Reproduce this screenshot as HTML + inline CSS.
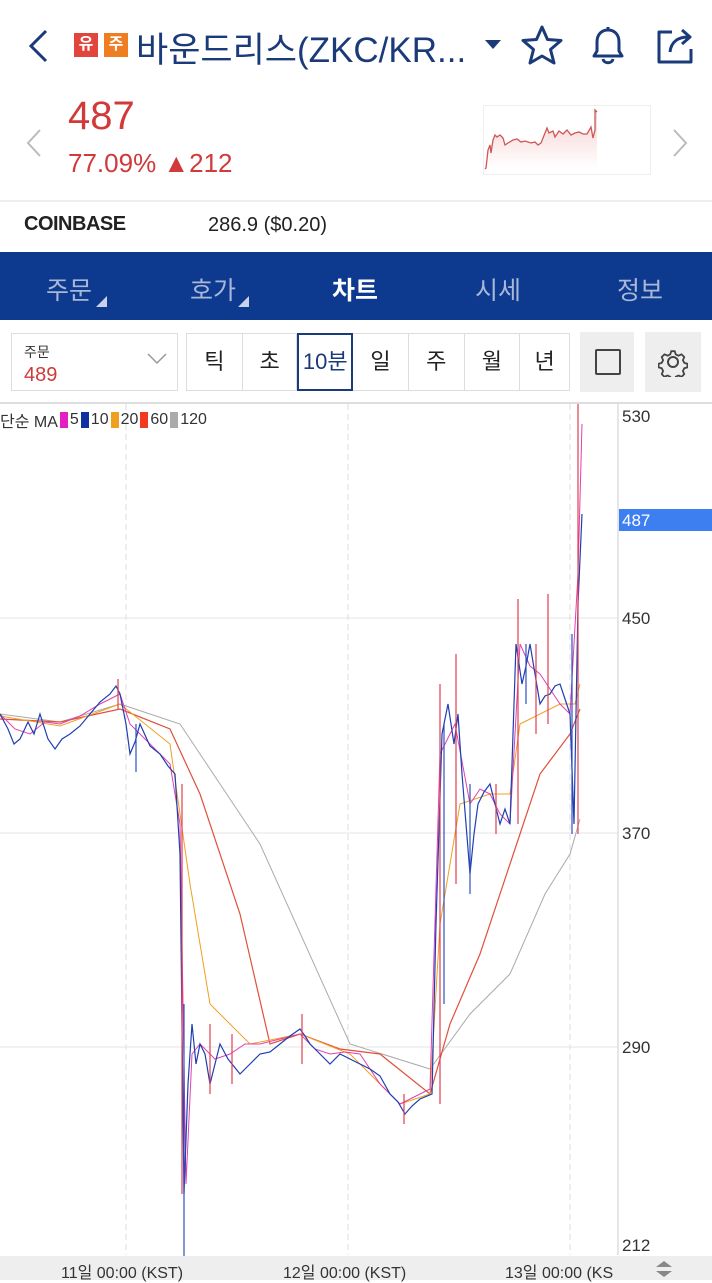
<!DOCTYPE html>
<html><head><meta charset="utf-8"><style>
*{margin:0;padding:0;box-sizing:border-box}
body{width:712px;height:1280px;overflow:hidden;background:#fff;font-family:"Liberation Sans","Noto Sans CJK KR",sans-serif;position:relative}
.a{position:absolute}
</style></head><body>
<svg class="a" style="left:26px;top:28px" width="24" height="36"><path d="M20 3 L5 18 L20 33" stroke="#1a3a7a" stroke-width="3" fill="none"/></svg>
<div class="a" style="left:74px;top:33px;width:24px;height:24px;background:#e2453c;color:#fff;font-size:16px;font-weight:bold;text-align:center;line-height:24px">유</div>
<div class="a" style="left:104px;top:33px;width:24px;height:24px;background:#ef7d22;color:#fff;font-size:16px;font-weight:bold;text-align:center;line-height:24px">주</div>
<div class="a" style="left:136px;top:22px;font-size:35px;color:#1a3a7a;letter-spacing:0px">바운드리스(ZKC/KR...</div>
<div class="a" style="left:485px;top:40px;width:0;height:0;border-left:8px solid transparent;border-right:8px solid transparent;border-top:9px solid #1a3a7a"></div>
<svg class="a" style="left:520px;top:24px" width="44" height="42"><path d="M22 3 L27.5 15.5 L41 16.5 L30.5 25.5 L34 39 L22 32 L10 39 L13.5 25.5 L3 16.5 L16.5 15.5Z" stroke="#1a3a7a" stroke-width="3" fill="none" stroke-linejoin="round"/></svg>
<svg class="a" style="left:586px;top:24px" width="44" height="42"><path d="M8 32 L11 27 V18 C11 10 16 6 22 6 C28 6 33 10 33 18 V27 L36 32 Z M17 35 C18 40 26 40 27 35 M22 3 V6" stroke="#1a3a7a" stroke-width="3" fill="none" stroke-linejoin="round"/></svg>
<svg class="a" style="left:654px;top:24px" width="44" height="42"><path d="M18 8 H5 V38 H37 V25 M16 28 C17 18 24 13 34 13 M28 6 L36 13 L28 20" stroke="#1a3a7a" stroke-width="3" fill="none" stroke-linejoin="round"/></svg>
<svg class="a" style="left:24px;top:128px" width="20" height="30"><path d="M16 2 L4 15 L16 28" stroke="#bbb" stroke-width="2" fill="none"/></svg>
<div class="a" style="left:68px;top:94px;font-size:40px;color:#d03a3a">487</div>
<div class="a" style="left:68px;top:148px;font-size:26px;color:#d03a3a">77.09% ▲212</div>
<div class="a" style="left:483px;top:105px;width:168px;height:70px;border:1px solid #eee"></div>
<svg class="a" style="left:483px;top:105px" width="168" height="70"><defs><linearGradient id="g" x1="0" y1="0" x2="0" y2="1"><stop offset="0" stop-color="#f6d0d0"/><stop offset="1" stop-color="#fff"/></linearGradient></defs><path d="M2 64 L3 63 L5 45 L7 40 L8 48 L10 35 L12 30 L14 32 L17 30 L20 33 L22 40 L25 38 L30 35 L34 34 L38 37 L42 36 L48 38 L52 37 L55 40 L58 38 L62 28 L64 23 L66 28 L70 26 L72 32 L76 26 L80 29 L84 25 L88 30 L92 28 L96 27 L100 29 L104 29 L108 22 L110 33 L112 25 L112 5 L114 7 L114 64Z" fill="url(#g)"/><path d="M2 64 L3 63 L5 45 L7 40 L8 48 L10 35 L12 30 L14 32 L17 30 L20 33 L22 40 L25 38 L30 35 L34 34 L38 37 L42 36 L48 38 L52 37 L55 40 L58 38 L62 28 L64 23 L66 28 L70 26 L72 32 L76 26 L80 29 L84 25 L88 30 L92 28 L96 27 L100 29 L104 29 L108 22 L110 33 L112 25 L112 5 L114 7" stroke="#d05555" stroke-width="1.3" fill="none"/></svg>
<svg class="a" style="left:670px;top:128px" width="20" height="30"><path d="M4 2 L16 15 L4 28" stroke="#bbb" stroke-width="2" fill="none"/></svg>
<div class="a" style="left:0;top:200px;width:712px;height:2px;background:#eee"></div>
<div class="a" style="left:24px;top:213px;font-size:20px;color:#222;font-weight:bold;letter-spacing:-0.5px">COINBASE</div>
<div class="a" style="left:208px;top:214px;font-size:20px;color:#222">286.9 ($0.20)</div>
<div class="a" style="left:0;top:252px;width:712px;height:68px;background:#0d3a8e"></div>
<div class="a" style="left:46px;top:271px;font-size:25px;color:#a9b8d8">주문</div>
<div class="a" style="left:96px;top:296px;border-left:11px solid transparent;border-bottom:11px solid #c8d2e8;width:0;height:0"></div>
<div class="a" style="left:190px;top:271px;font-size:25px;color:#a9b8d8">호가</div>
<div class="a" style="left:238px;top:296px;border-left:11px solid transparent;border-bottom:11px solid #c8d2e8;width:0;height:0"></div>
<div class="a" style="left:332px;top:271px;font-size:25px;color:#fff;font-weight:bold">차트</div>
<div class="a" style="left:475px;top:271px;font-size:25px;color:#a9b8d8">시세</div>
<div class="a" style="left:617px;top:271px;font-size:25px;color:#a9b8d8">정보</div>
<div class="a" style="left:11px;top:333px;width:167px;height:58px;border:1px solid #ddd"></div>
<div class="a" style="left:24px;top:342px;font-size:14px;color:#333">주문</div>
<div class="a" style="left:24px;top:364px;font-size:20px;color:#d03a3a">489</div>
<svg class="a" style="left:146px;top:352px" width="22" height="14"><path d="M2 2 L11 11 L20 2" stroke="#999" stroke-width="1.5" fill="none"/></svg>
<div class="a" style="left:186px;top:333px;width:384px;height:58px;border:1px solid #ddd;display:flex">
<div style="width:56px;border-right:1px solid #ddd;text-align:center;line-height:56px;font-size:22px;color:#222">틱</div>
<div style="width:55px;border-right:1px solid #ddd;text-align:center;line-height:56px;font-size:22px;color:#222">초</div>
<div style="width:56px;border:2px solid #1a3a7a;margin-top:-1px;height:58px;text-align:center;line-height:54px;font-size:22px;color:#1a3a7a">10분</div>
<div style="width:56px;border-right:1px solid #ddd;text-align:center;line-height:56px;font-size:22px;color:#222">일</div>
<div style="width:56px;border-right:1px solid #ddd;text-align:center;line-height:56px;font-size:22px;color:#222">주</div>
<div style="width:56px;border-right:1px solid #ddd;text-align:center;line-height:56px;font-size:22px;color:#222">월</div>
<div style="width:49px;text-align:center;line-height:56px;font-size:22px;color:#222">년</div>
</div>
<div class="a" style="left:580px;top:332px;width:54px;height:60px;background:#eee"></div>
<div class="a" style="left:595px;top:349px;width:26px;height:26px;border:2px solid #444;border-radius:2px"></div>
<div class="a" style="left:645px;top:332px;width:56px;height:60px;background:#eee"></div>
<svg class="a" style="left:658px;top:347px" width="30" height="30"><circle cx="15" cy="15" r="5" stroke="#444" stroke-width="2" fill="none"/><path d="M13 3h4l1 3.5 3 1.5 3.5-1.5 3 3-1.5 3.5 1.5 3 3.5 1v4l-3.5 1-1.5 3 1.5 3.5-3 3-3.5-1.5-3 1.5-1 3.5h-4l-1-3.5-3-1.5-3.5 1.5-3-3 1.5-3.5-1.5-3-3.5-1v-4l3.5-1 1.5-3-1.5-3.5 3-3 3.5 1.5 3-1.5z" transform="translate(1.5 1.5) scale(0.9)" stroke="#444" stroke-width="2" fill="none" stroke-linejoin="round"/></svg>
<div class="a" style="left:0;top:402px;width:712px;height:2px;background:#ddd"></div>
<svg class="a" style="left:0;top:404px" width="712" height="876">
<g stroke="#e4e4e4" stroke-width="1"><line x1="0" y1="214" x2="618" y2="214"/><line x1="0" y1="429" x2="618" y2="429"/><line x1="0" y1="643" x2="618" y2="643"/></g>
<g stroke="#ddd" stroke-dasharray="6 4"><line x1="126" y1="0" x2="126" y2="851"/><line x1="348" y1="0" x2="348" y2="851"/><line x1="570" y1="0" x2="570" y2="851"/></g>
<line x1="618" y1="0" x2="618" y2="851" stroke="#ccc"/>
<polyline fill="none" stroke="#aaa" stroke-width="1" points="0,310 60,318 120,300 180,320 260,440 350,640 430,665 470,610 510,570 545,490 570,450 580,415"/>
<polyline fill="none" stroke="#e0503a" stroke-width="1.2" points="0,315 60,318 120,305 170,325 200,390 240,510 270,640 300,630 340,645 380,650 430,690 450,620 480,550 510,460 540,370 570,330 580,305"/>
<polyline fill="none" stroke="#f0a020" stroke-width="1" points="0,312 60,322 120,300 170,340 190,480 210,600 250,640 300,630 350,650 400,700 430,690 440,520 460,400 490,390 510,390 520,320 560,300 575,300 580,280"/>
<polyline fill="none" stroke="#e040b0" stroke-width="1" points="0,310 15,325 30,330 45,318 60,320 80,312 100,300 120,290 130,320 140,330 155,345 170,360 180,420 186,780 192,650 200,640 215,655 230,650 245,640 260,640 280,635 300,630 315,645 330,650 345,648 360,650 380,680 400,700 430,685 440,350 455,320 470,400 480,385 490,390 500,410 510,420 520,240 530,262 540,270 550,285 560,300 570,310 578,170 582,20"/>
<polyline fill="none" stroke="#1f3fb0" stroke-width="1.2" points="0,310 8,325 14,340 20,335 28,318 34,330 40,310 48,335 55,345 62,335 70,330 80,322 90,310 100,298 110,290 116,282 120,290 126,320 130,350 135,338 140,320 150,342 160,350 168,362 175,370 180,450 184,790 188,680 192,620 196,660 200,640 205,650 210,680 215,660 220,640 228,655 240,670 250,660 260,650 270,648 280,640 290,632 300,625 305,632 310,640 320,650 330,660 340,650 350,655 360,660 370,665 380,672 390,690 398,698 405,710 412,702 420,695 432,690 436,520 442,330 448,300 454,340 458,310 462,370 466,420 470,470 474,430 478,400 484,388 490,380 495,400 500,420 505,405 510,420 516,240 519,260 522,280 526,262 530,240 535,270 540,300 545,292 550,290 555,282 560,280 565,295 570,310 574,420 578,200 582,110"/>
<g stroke="#e04050" stroke-width="1.2"><line x1="182" y1="380" x2="182" y2="790"/><line x1="440" y1="280" x2="440" y2="700"/><line x1="456" y1="250" x2="456" y2="480"/><line x1="518" y1="195" x2="518" y2="420"/><line x1="548" y1="190" x2="548" y2="320"/><line x1="578" y1="0" x2="578" y2="430"/><line x1="302" y1="610" x2="302" y2="660"/><line x1="210" y1="620" x2="210" y2="690"/><line x1="118" y1="275" x2="118" y2="305"/><line x1="232" y1="630" x2="232" y2="680"/><line x1="496" y1="380" x2="496" y2="430"/><line x1="536" y1="240" x2="536" y2="330"/><line x1="404" y1="690" x2="404" y2="720"/></g>
<g stroke="#3050c0" stroke-width="1.2"><line x1="184" y1="600" x2="184" y2="876"/><line x1="444" y1="320" x2="444" y2="600"/><line x1="470" y1="380" x2="470" y2="490"/><line x1="572" y1="230" x2="572" y2="430"/><line x1="136" y1="320" x2="136" y2="368"/><line x1="526" y1="240" x2="526" y2="300"/></g>
<rect x="619" y="105" width="93" height="22" fill="#3d7ef0"/>
<g font-size="17" fill="#333" font-family="Liberation Sans"><text x="622" y="18">530</text><text x="622" y="220">450</text><text x="622" y="435">370</text><text x="622" y="649">290</text><text x="622" y="847">212</text><text x="622" y="122" fill="#fff">487</text></g>
</svg>
<div class="a" style="left:0;top:408px;font-size:16px;color:#333;display:flex;align-items:center;gap:2px">단순 MA<span style="width:8px;height:16px;background:#e020c0;display:inline-block"></span>5<span style="width:8px;height:16px;background:#1030a0;display:inline-block"></span>10<span style="width:8px;height:16px;background:#f0a020;display:inline-block"></span>20<span style="width:8px;height:16px;background:#f03a20;display:inline-block"></span>60<span style="width:8px;height:16px;background:#aaa;display:inline-block"></span>120</div>
<div class="a" style="left:0;top:1256px;width:712px;height:24px;background:#eeeeee"></div>
<div class="a" style="left:61px;top:1259px;font-size:16px;color:#333">11일 00:00 (KST)</div>
<div class="a" style="left:283px;top:1259px;font-size:16px;color:#333">12일 00:00 (KST)</div>
<div class="a" style="left:505px;top:1259px;font-size:16px;color:#333">13일 00:00 (KS</div>
<svg class="a" style="left:652px;top:1259px" width="24" height="20"><path d="M4 8 L12 2 L20 8Z M4 12 L12 18 L20 12Z" fill="#888"/></svg>
</body></html>
